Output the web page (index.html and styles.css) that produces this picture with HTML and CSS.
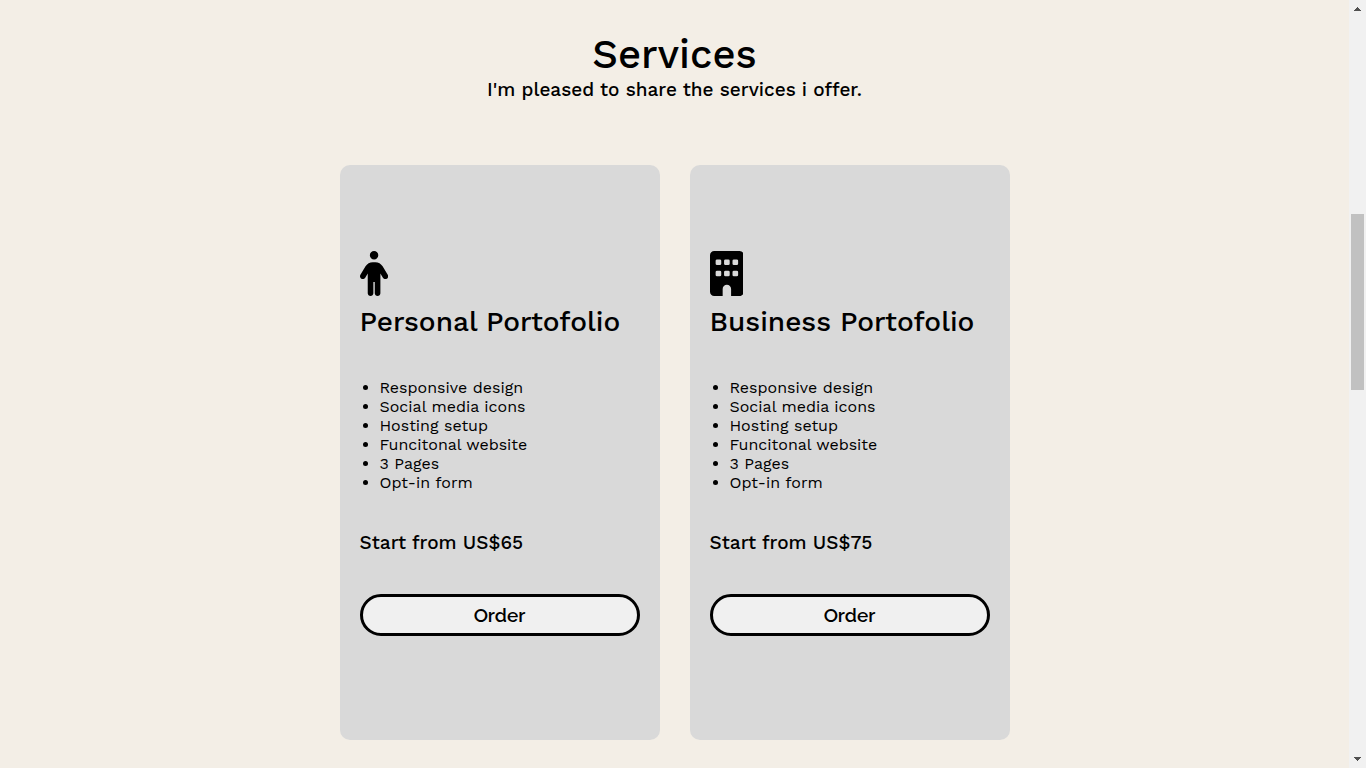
FILE: index.html
```html
<!DOCTYPE html>
<html lang="en">
<head>
<meta charset="utf-8">
<title>Services</title>
<meta name="viewport" content="width=device-width, initial-scale=1">
<link rel="stylesheet" href="styles.css">
</head>
<body>
<div class="page">
  <main class="services">
    <header class="intro">
      <h1>Services</h1>
      <p>I'm pleased to share the services i offer.</p>
    </header>
    <div class="cards">
      <article class="card">
        <svg class="icon" viewBox="0 0 320 512" aria-hidden="true"><path d="M112 48a48 48 0 1 1 96 0 48 48 0 1 1-96 0zm40 304V480c0 17.700-14.300 32-32 32s-32-14.300-32-32V256.900L59.400 304.500c-9.100 15.100-28.800 20-43.900 10.900s-20-28.800-10.900-43.900l58.300-97c17.400-28.900 48.600-46.600 82.300-46.600h29.700c33.700 0 64.900 17.700 82.300 46.600l58.300 97c9.100 15.100 4.200 34.800-10.900 43.900s-34.800 4.200-43.900-10.900L232 256.900V480c0 17.700-14.300 32-32 32s-32-14.300-32-32V352H152z"/></svg>
        <h2>Personal Portofolio</h2>
        <ul>
          <li>Responsive design</li>
          <li>Social media icons</li>
          <li>Hosting setup</li>
          <li>Funcitonal website</li>
          <li>3 Pages</li>
          <li>Opt-in form</li>
        </ul>
        <p class="price">Start from US$65</p>
        <button type="button" class="order">Order</button>
      </article>
      <article class="card">
        <svg class="icon" viewBox="0 0 384 512" aria-hidden="true"><path fill-rule="evenodd" d="M48 0C21.500 0 0 21.500 0 48V464c0 26.500 21.500 48 48 48h96V432c0-26.500 21.500-48 48-48s48 21.500 48 48v80h96c26.500 0 48-21.500 48-48V48c0-26.500-21.500-48-48-48H48zM80 96h32q16 0 16 16v32q0 16-16 16H80q-16 0-16-16v-32q0-16 16-16zm96 0h32q16 0 16 16v32q0 16-16 16h-32q-16 0-16-16v-32q0-16 16-16zm96 0h32q16 0 16 16v32q0 16-16 16h-32q-16 0-16-16v-32q0-16 16-16zM80 224h32q16 0 16 16v32q0 16-16 16H80q-16 0-16-16v-32q0-16 16-16zm96 0h32q16 0 16 16v32q0 16-16 16h-32q-16 0-16-16v-32q0-16 16-16zm96 0h32q16 0 16 16v32q0 16-16 16h-32q-16 0-16-16v-32q0-16 16-16z"/></svg>
        <h2>Business Portofolio</h2>
        <ul>
          <li>Responsive design</li>
          <li>Social media icons</li>
          <li>Hosting setup</li>
          <li>Funcitonal website</li>
          <li>3 Pages</li>
          <li>Opt-in form</li>
        </ul>
        <p class="price">Start from US$75</p>
        <button type="button" class="order">Order</button>
      </article>
    </div>
  </main>
  <div class="scrollbar" aria-hidden="true">
    <svg class="arrow" viewBox="0 0 7 4"><path d="M3 0h1v1h1v1h1v1h1v1H0V3h1V2h1V1h1z"/></svg>
    <div class="track"><div class="thumb"></div></div>
    <svg class="arrow" viewBox="0 0 7 4"><path d="M0 0h7v1H6v1H5v1H4v1H3V3H2V2H1V1H0z"/></svg>
  </div>
</div>
</body>
</html>
```
FILE: styles.css
```css
* {
  box-sizing: border-box;
  margin: 0;
  padding: 0;
}

body {
  background: #f3eee6;
  color: #000;
  font-family: "Work Sans", Inter, sans-serif;
}

.page {
  display: flex;
  min-height: 100vh;
}

.services {
  flex: 1;
  padding: 32px 20px 28px;
}

.intro {
  text-align: center;
  margin-bottom: 64px;
}

h1 {
  font-size: 40px;
  line-height: 46px;
  font-weight: 500;
}

.intro p {
  font-size: 19px;
  line-height: 23px;
  font-weight: 500;
}

.cards {
  display: flex;
  flex-wrap: wrap;
  justify-content: center;
  gap: 30px;
}

.card {
  display: flex;
  flex-direction: column;
  width: 320px;
  padding: 86px 20px 104px;
  background: #d9d9d9;
  border-radius: 10px;
}

.icon {
  align-self: flex-start;
  height: 45px;
  margin-bottom: 9px;
}

h2 {
  font-size: 28px;
  line-height: 34px;
  font-weight: 500;
  margin-bottom: 39px;
}

ul {
  padding-left: 20px;
  font-size: 16px;
  line-height: 19px;
  font-weight: 400;
  margin-bottom: 40px;
}

.price {
  font-size: 19px;
  line-height: 22px;
  font-weight: 500;
  margin-bottom: 40px;
}

.order {
  height: 42px;
  border: 3px solid #000;
  border-radius: 21px;
  background: #f0f0f0;
  color: #000;
  font-family: Raleway, Lato, sans-serif;
  font-size: 19px;
  font-weight: 600;
}

.scrollbar {
  display: flex;
  flex-direction: column;
  align-items: center;
  width: 17px;
  height: 100vh;
  padding: 7px 2px;
  background: #f1f1f1;
}

.arrow {
  width: 7px;
  height: 4px;
  fill: #505050;
}

.track {
  flex: 1;
  align-self: stretch;
  display: grid;
  grid-template-rows: 203fr 176fr 367fr;
}

.thumb {
  grid-row: 2;
  background: #c1c1c1;
}
```
